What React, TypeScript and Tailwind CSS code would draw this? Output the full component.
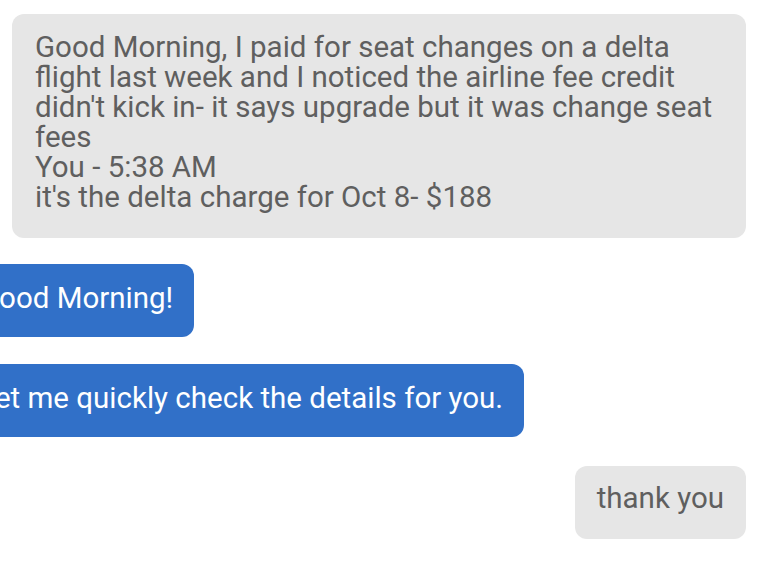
export default function App() {
  return (
    <div className="h-[564px] w-[766px] overflow-hidden bg-white font-['Roboto',sans-serif] text-[29.5px] leading-[30px]">
      <div className="flex flex-col pt-[14px]">
        <div className="mr-[20px] ml-[12px] rounded-[12px] bg-[#e6e6e6] pt-[18px] pb-[26px] pl-[23px] pr-[10px] text-[#5f5f5f]">
          <p>
            Good Morning, I paid for seat changes on a delta flight last week
            and I noticed the airline fee credit didn't kick in- it says
            upgrade but it was change seat fees
          </p>
          <p>You - 5:38 AM</p>
          <p>it's the delta charge for Oct 8- $188</p>
        </div>

        <div className="mt-[26px] -ml-[42px] self-start rounded-[12px] bg-[#3170c8] px-[21px] pt-[19px] pb-[24px] text-white">
          Good Morning!
        </div>

        <div className="mt-[27px] -ml-[42px] self-start rounded-[12px] bg-[#3170c8] px-[21px] pt-[19px] pb-[24px] text-white">
          Let me quickly check the details for you.
        </div>

        <div className="mt-[29px] mr-[20px] self-end rounded-[12px] bg-[#e6e6e6] px-[22px] pt-[17px] pb-[26px] text-[#5f5f5f]">
          thank you
        </div>
      </div>
    </div>
  );
}
